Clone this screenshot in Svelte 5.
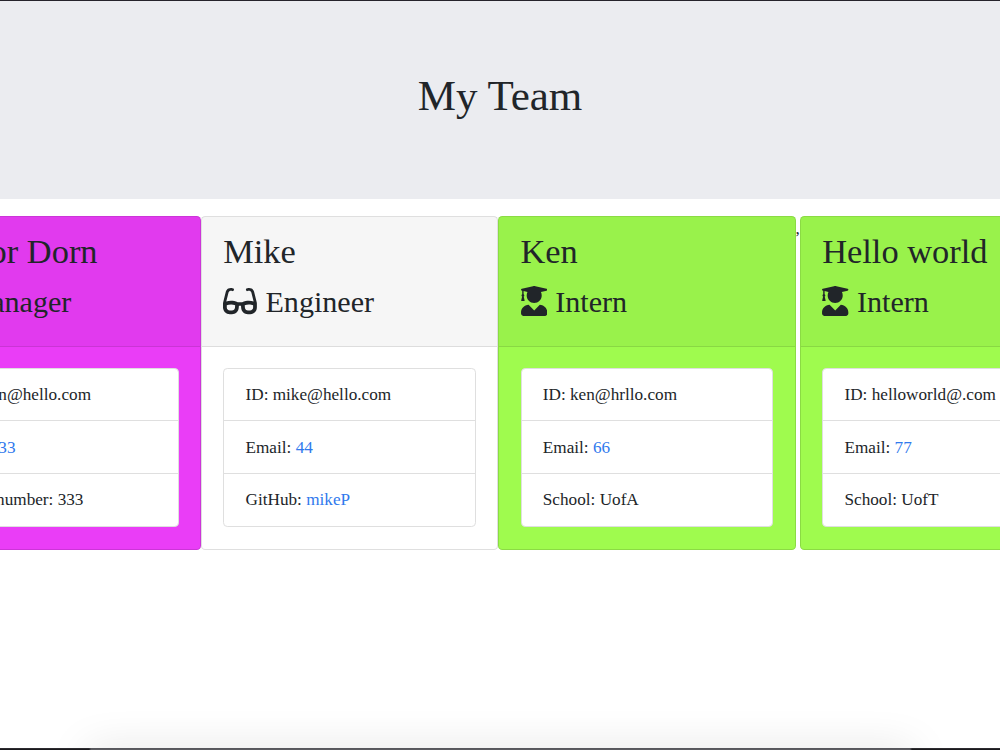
<script>
  const icons = {
    mug: {
      width: 512,
      path: 'M64 192h288a96 96 0 0 1 0 192h-32a80 80 0 0 1-80 80H112a80 80 0 0 1-80-80V224a32 32 0 0 1 32-32zm256 64v64h32a32 32 0 0 0 0-64z'
    },
    glasses: {
      width: 576,
      path: 'M574.1 280.37L528.75 98.66c-5.91-23.7-21.59-44.05-43-55.81-21.44-11.73-46.97-14.11-70.19-6.33l-15.25 5.08c-8.39 2.79-12.92 11.86-10.12 20.24l5.06 15.18c2.79 8.38 11.85 12.91 20.23 10.12l13.18-4.39c10.87-3.62 23-3.57 33.16 1.73 10.29 5.37 17.57 14.56 20.37 25.82l38.46 153.82c-22.19-6.81-49.79-12.46-81.2-12.46-34.77 0-73.98 7.02-114.85 26.74h-73.18c-40.87-19.74-80.08-26.75-114.86-26.75-31.42 0-59.02 5.65-81.21 12.46l38.46-153.83c2.79-11.25 10.09-20.45 20.38-25.81 10.16-5.3 22.28-5.35 33.15-1.73l13.17 4.39c8.38 2.79 17.44-1.74 20.23-10.12l5.06-15.18c2.8-8.38-1.73-17.45-10.12-20.24l-15.25-5.08c-23.22-7.78-48.75-5.41-70.19 6.33-21.41 11.77-37.09 32.11-43 55.8L1.9 280.37A64.218 64.218 0 0 0 0 295.86v70.25C0 429.01 51.58 480 115.2 480h37.12c60.28 0 110.37-45.94 114.88-105.37l2.93-38.63h35.75l2.93 38.63C313.31 434.06 363.4 480 423.68 480h37.12c63.62 0 115.2-50.99 115.2-113.88v-70.25c0-5.23-.64-10.43-1.9-15.5zm-370.72 89.42c-1.97 25.91-24.4 46.21-51.06 46.21H115.2C86.97 416 64 393.62 64 366.11v-37.54c18.12-6.49 43.42-12.92 72.58-12.92 23.86 0 47.26 4.33 69.93 12.92l-3.13 41.22zM512 366.12c0 27.51-22.97 49.88-51.2 49.88h-37.12c-26.67 0-49.1-20.3-51.06-46.21l-3.13-41.22c22.67-8.59 46.08-12.92 69.95-12.92 29.12 0 54.43 6.44 72.55 12.93v37.54z'
    },
    graduate: {
      width: 448,
      path: 'M319.4 320.6L224 416l-95.4-95.4C57.1 323.7 0 382.2 0 454.4v9.6c0 26.5 21.5 48 48 48h352c26.5 0 48-21.5 48-48v-9.6c0-72.2-57.1-130.7-128.6-133.8zM13.6 79.8l6.4 1.5v58.4c-7 4.2-12 11.5-12 20.3 0 8.4 4.6 15.4 11.1 19.7L3.5 242c-1.7 6.9 2.1 14 7.6 14h41.8c5.5 0 9.3-7.1 7.6-14l-15.6-62.3C51.4 175.4 56 168.4 56 160c0-8.8-5-16.1-12-20.3V87.1l66 15.9c-8.6 17.2-14 36.4-14 57 0 70.7 57.3 128 128 128s128-57.3 128-128c0-20.6-5.3-39.8-14-57l96.3-23.2c18.2-4.4 18.2-27.1 0-31.5l-190.4-46c-13-3.1-26.7-3.1-39.7 0L13.6 48.2c-18.1 4.4-18.1 27.1 0 31.6z'
    }
  };

  const team = [
    { name: 'Trevor Dorn', role: 'Manager', icon: 'mug', id: 'dorn@hello.com', email: '33', label: 'Office number', value: '333' },
    { name: 'Mike', role: 'Engineer', icon: 'glasses', id: 'mike@hello.com', email: '44', label: 'GitHub', value: 'mikeP', link: 'https://github.com/mikeP' },
    { name: 'Ken', role: 'Intern', icon: 'graduate', id: 'ken@hrllo.com', email: '66', label: 'School', value: 'UofA' },
    { name: 'Hello world', role: 'Intern', icon: 'graduate', id: 'helloworld@.com', email: '77', label: 'School', value: 'UofT' }
  ];
</script>

<div class="page">
  <header class="jumbotron">
    <h1>My Team</h1>
  </header>

  <main class="team-area">
    {#each team as member, i}
      {#if i === 3}<span class="separator">,</span>{/if}
      <div class="card {member.role.toLowerCase()}">
        <div class="card-header">
          <h2>{member.name}</h2>
          <h3>
            <svg class="icon {member.icon}" viewBox="0 0 {icons[member.icon].width} 512" aria-hidden="true">
              <path d={icons[member.icon].path} />
            </svg>
            <span>{member.role}</span>
          </h3>
        </div>
        <div class="card-body">
          <ul class="list-group">
            <li>ID: {member.id}</li>
            <li>Email: <a href="mailto:{member.email}">{member.email}</a></li>
            <li>
              {member.label}:
              {#if member.link}<a href={member.link}>{member.value}</a>{:else}{member.value}{/if}
            </li>
          </ul>
        </div>
      </div>
    {/each}
  </main>

  <div class="bottom-shade"></div>
  <div class="bottom-edge"></div>
</div>

<style>
  :global(body) {
    margin: 0;
    overflow: hidden;
  }

  .page {
    position: relative;
    box-sizing: border-box;
    height: 750px;
    overflow: hidden;
    border-top: 1px solid #26232b;
    background: #fff;
    color: #212529;
    font-family: "Liberation Serif", "Times New Roman", serif;
    font-size: 17.2px;
    line-height: 1.5;
  }

  h1,
  h2,
  h3 {
    margin: 0;
    font-weight: 400;
    line-height: 1.2;
  }

  .jumbotron {
    box-sizing: border-box;
    height: 198px;
    padding-top: 69px;
    background: #ebecf0;
    text-align: center;
  }

  h1 {
    font-size: 43px;
  }

  .team-area {
    display: flex;
    align-items: flex-start;
    width: 1196px;
    margin: 17px 0 0 -96.4px;
  }

  .card {
    box-sizing: border-box;
    flex: none;
    width: 297.3px;
    height: 334px;
    border: 1px solid rgba(0, 0, 0, 0.125);
    border-radius: 4.3px;
    background: #fff;
  }

  .manager {
    background: #ea3df7;
  }

  .intern {
    background: #9ffb4e;
  }

  .card-header {
    box-sizing: border-box;
    height: 130px;
    padding: 13px 21.3px;
    border-bottom: 1px solid rgba(0, 0, 0, 0.1);
    background: rgba(0, 0, 0, 0.035);
  }

  h2 {
    font-size: 34.4px;
    line-height: 42px;
    white-space: nowrap;
  }

  h3 {
    display: flex;
    align-items: center;
    gap: 8.4px;
    margin-top: 12px;
    font-size: 30.1px;
    line-height: 36px;
  }

  .icon {
    width: 30.1px;
    height: 30.1px;
    margin-bottom: 2px;
    fill: currentColor;
  }

  .icon.glasses {
    width: 33.9px;
  }

  .icon.graduate {
    width: 26.4px;
  }

  .card-body {
    padding: 20.6px 21.3px;
  }

  .list-group {
    margin: 0;
    padding: 0;
    border: 1px solid #dfdfdf;
    border-radius: 4.3px;
    background: #fff;
    list-style: none;
  }

  li {
    box-sizing: border-box;
    height: 52.7px;
    padding: 13.3px 21.3px;
    border-bottom: 1px solid #dfdfdf;
    white-space: nowrap;
  }

  li:last-child {
    height: 51.9px;
    border-bottom: 0;
  }

  a {
    color: #3079ed;
    text-decoration: none;
  }

  .separator {
    flex: none;
    width: 4.4px;
  }

  .bottom-shade {
    position: absolute;
    right: 90px;
    bottom: -18px;
    left: 90px;
    height: 18px;
    box-shadow: 0 4px 44px 2px rgba(0, 0, 0, 0.15);
  }

  .bottom-edge {
    position: absolute;
    right: 0;
    bottom: 0;
    left: 0;
    height: 1px;
    border-top: 1px solid rgba(80, 80, 85, 0.35);
    background: linear-gradient(to right, #1b1a1d 89px, #5b5b60 91px, #5b5b60 910px, #1b1a1d 912px);
  }
</style>
